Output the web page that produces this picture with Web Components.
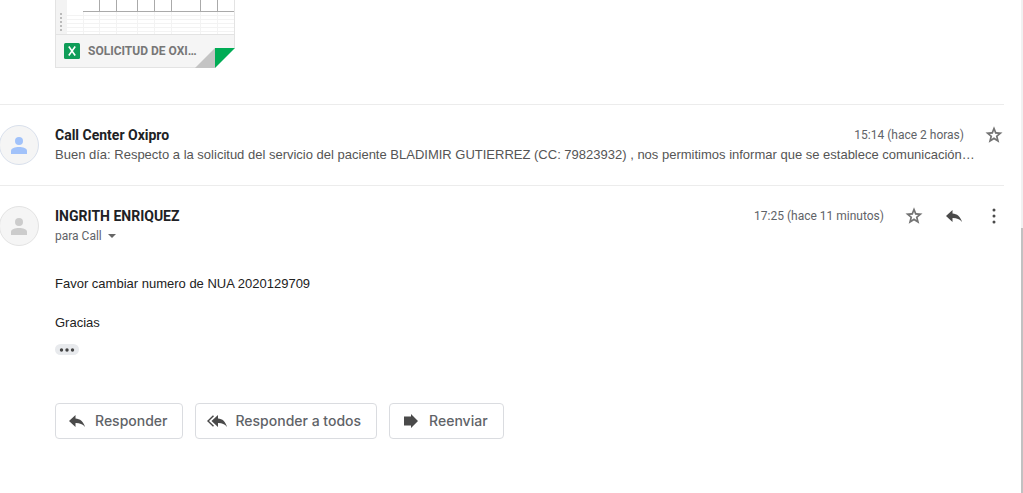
<!DOCTYPE html>
<html lang="es">
<head>
<meta charset="utf-8">
<title>Conversación</title>
<style>
body { margin: 0; background: #fff; font-family: Roboto, "Liberation Sans", sans-serif; color: #202124; }
</style>
</head>
<body>
<mail-thread>
  <file-card>SOLICITUD DE OXI…</file-card>
  <mail-message style="--person: #a1c2fa; --ring: #d9e0ec">
    <span slot="name">Call Center Oxipro</span>
    <span slot="time">15:14 (hace 2 horas)</span>
    <icon-button slot="actions" icon="star" label="Destacar"></icon-button>
    <mail-snippet slot="detail">Buen día: Respecto a la solicitud del servicio del paciente BLADIMIR GUTIERREZ (CC: 79823932) , nos permitimos informar que se establece comunicación…</mail-snippet>
  </mail-message>
  <mail-message>
    <span slot="name">INGRITH ENRIQUEZ</span>
    <span slot="time">17:25 (hace 11 minutos)</span>
    <icon-button slot="actions" icon="star" label="Destacar"></icon-button>
    <icon-button slot="actions" icon="reply" label="Responder"></icon-button>
    <icon-button slot="actions" icon="more" label="Más"></icon-button>
    <mail-recipient slot="detail">para Call</mail-recipient>
    <mail-body slot="body">
      <p>Favor cambiar numero de NUA 2020129709</p>
      <p>Gracias</p>
    </mail-body>
  </mail-message>
  <reply-bar></reply-bar>
</mail-thread>

<script>
const ICONS = {
  star: '<path fill="#747474" fill-rule="evenodd" d="M10 1.300l2.300 5.700 6.200.5-4.800 4 1.600 6.200L10 14.400l-5.300 3.300 1.600-6.200-4.800-4 6.200-.5zM10 5.800L8.900 8.700l-3.100.2 2.400 2-.8 3 2.600-1.700 2.600 1.700-.8-3 2.400-2-3.100-.2z"/>',
  reply: '<path fill="#4a4a4a" d="M8.500 4v3.500C13 7.700 16.500 10.500 18 16c-2.500-3-5.500-4-9.500-3.900V16L2 10z"/>',
  replyAll: '<path fill="#4a4a4a" d="M11 4v3.500c4.500.2 7.500 3 9 8.500-2.500-3-5-4-9-3.900V16l-6.500-6z"/><path fill="none" stroke="#4a4a4a" stroke-width="1.500" d="M6.500 4.800L1 10l5.500 5.200"/>',
  forward: '<path fill="#4a4a4a" d="M3 5.500h7V3l7 7-7 7v-2.500H3z"/>',
  more: '<g fill="#4a4a4a"><circle cx="10" cy="4" r="1.500"/><circle cx="10" cy="10" r="1.500"/><circle cx="10" cy="16" r="1.500"/></g>'
};
const icon = name => `<svg width="20" height="20" viewBox="0 0 20 20" aria-hidden="true">${ICONS[name]}</svg>`;

function define(tag, render) {
  customElements.define(tag, class extends HTMLElement {
    constructor() { super(); this.attachShadow({ mode: 'open' }); }
    connectedCallback() { this.shadowRoot.innerHTML = render(this); }
  });
}

define('mail-thread', () => `
  <style>
    :host { display: grid; grid-template-columns: minmax(0, 1fr) 2px; column-gap: 17px; min-height: 100vh; }
    main { margin-left: -1px; }
    .track { display: grid; grid-template-rows: 228fr 265fr; background: #f1f1f1; }
    .thumb { grid-row: 2; background: #c1c1c1; }
  </style>
  <main><slot></slot></main>
  <div class="track"><div class="thumb"></div></div>`);

define('file-card', () => {
  const columns = [99, 116, 137, 154, 171, 200, 217].map(x => x - 56);
  const rows = [14, 18, 22, 26, 30];
  return `
  <style>
    :host { display: block; padding: 0 0 36px 56px; }
    a { display: block; box-sizing: border-box; width: 180px; position: relative; border: 1px solid #e3e3e3; border-top: 0;
        color: #777; text-decoration: none; font-size: 12px; font-weight: 700; line-height: 32px; }
    .sheet { display: block; width: 100%; height: 34px; background: #fff; }
    .bar { display: flex; align-items: center; gap: 8px; padding: 0 8px; border-top: 1px solid #e3e3e3; background: #f5f5f5; }
    .fold { position: absolute; right: -1px; bottom: -1px; }
  </style>
  <a href="#">
    <svg class="sheet" viewBox="0 0 178 34" aria-hidden="true">
      <path fill="#f3f3f3" d="M0 0h11v34H0z"/>
      <path stroke="#f3f3f3" d="M27.500 11v23${columns.map(x => `M${x}.500 11v23`).join('')}${rows.map(y => `M0 ${y + 1}.500h178`).join('')}"/>
      <path stroke="#aaa" d="M27 11.500h151${columns.map(x => `M${x}.500 0v11`).join('')}"/>
      <path stroke="#bbb" stroke-width="2" d="${rows.map(y => `M4 ${y}h2`).join('')}"/>
    </svg>
    <div class="bar">
      <svg width="16" height="16" viewBox="0 0 16 16" aria-hidden="true">
        <rect width="16" height="16" rx="1.500" fill="#0f9d58"/>
        <path stroke="#fff" stroke-width="1.600" fill="none" d="M4.800 3.500l6.400 9M11.200 3.500l-6.400 9"/>
      </svg>
      <slot></slot>
    </div>
    <svg class="fold" width="40" height="20" viewBox="0 0 40 20" aria-hidden="true">
      <path fill="#fff" d="M20 0h20v20H20z"/><path fill="#c4c4c4" d="M0 20L20 0v20z"/><path fill="#00ac55" d="M20 0h20L20 20z"/>
    </svg>
  </a>`;
});

define('mail-message', () => `
  <style>
    :host { display: block; border-top: 1px solid #ececec; padding: 20px 0; }
    header { display: grid; grid-template-columns: 40px minmax(0, 1fr); column-gap: 16px; }
    .avatar { box-sizing: border-box; width: 40px; height: 40px; border: 1px solid var(--ring, #e3e3e3); border-radius: 50%;
              background: #f5f5f5; display: grid; place-items: center; }
    .top { display: flex; align-items: center; gap: 20px; height: 20px; }
    h3 { flex: 1; margin: 0; font-size: 14px; line-height: 20px; font-weight: 700; }
    .time { font-size: 12px; line-height: 20px; color: #5f6368; }
    .body { padding-left: 56px; }
  </style>
  <header>
    <div class="avatar">
      <svg width="16" height="18" viewBox="0 0 16 18" aria-hidden="true">
        <g fill="var(--person, #ccc)"><circle cx="8" cy="5" r="4"/><path d="M0 18v-3C0 12 4 11 8 11s8 1 8 4v3z"/></g>
      </svg>
    </div>
    <div>
      <div class="top"><h3><slot name="name"></slot></h3><span class="time"><slot name="time"></slot></span><slot name="actions"></slot></div>
      <slot name="detail"></slot>
    </div>
  </header>
  <div class="body"><slot name="body"></slot></div>`);

define('icon-button', el => `
  <style>
    :host { display: block; }
    button { display: block; border: 0; padding: 0; background: none; cursor: pointer; }
    svg { display: block; }
  </style>
  <button type="button" aria-label="${el.getAttribute('label')}">${icon(el.getAttribute('icon'))}</button>`);

define('mail-snippet', () => `
  <style>
    :host { display: block; overflow: hidden; white-space: nowrap; font: 13px/20px "Liberation Sans", Arial, sans-serif; color: #555; }
  </style><slot></slot>`);

define('mail-recipient', () => `
  <style>
    :host { display: block; }
    button { display: flex; align-items: center; gap: 6px; border: 0; padding: 0; background: none; font: 12px/20px Roboto, sans-serif; color: #5f6368; }
  </style>
  <button type="button"><slot></slot><svg width="8" height="4" viewBox="0 0 8 4" aria-hidden="true"><path fill="#666" d="M0 0h8L4 4z"/></svg></button>`);

define('mail-body', () => `
  <style>
    :host { display: block; padding-top: 28px; font: 13px/19px "Liberation Sans", Arial, sans-serif; color: #222; }
    ::slotted(p) { margin: 0 0 20px; }
    ::slotted(p:last-of-type) { margin-bottom: 12px; }
    button { display: flex; align-items: center; justify-content: center; width: 24px; height: 11px; padding: 0; border: 0; border-radius: 6px; background: #e8eaed; }
  </style>
  <slot></slot>
  <button type="button" aria-label="Mostrar contenido recortado">
    <svg width="16" height="4" viewBox="0 0 16 4" aria-hidden="true"><g fill="#444"><circle cx="2.500" cy="2" r="1.700"/><circle cx="8" cy="2" r="1.700"/><circle cx="13.500" cy="2" r="1.700"/></g></svg>
  </button>`);

define('reply-bar', () => `
  <style>
    :host { display: flex; flex-wrap: wrap; gap: 12px; padding: 28px 0 54px 56px; }
    button { display: flex; align-items: center; gap: 8px; height: 36px; padding: 0 15px 0 11px; border: 1px solid #dadce0; border-radius: 4px;
             background: #fff; color: #5f6368; font: 500 14px/20px Inter, sans-serif; }
  </style>
  <button type="button">${icon('reply')}Responder</button>
  <button type="button">${icon('replyAll')}Responder a todos</button>
  <button type="button">${icon('forward')}Reenviar</button>`);
</script>
</body>
</html>
